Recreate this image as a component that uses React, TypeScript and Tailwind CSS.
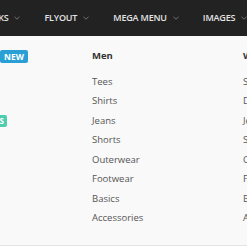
import React from "react";

const Chevron = () => (
  <svg width="6" height="4" viewBox="0 0 6 4" className="shrink-0">
    <polyline points="0.5,0.8 3,3.2 5.5,0.8" fill="none" stroke="#7a7a7a" strokeWidth="0.9" />
  </svg>
);

const navItems = ["LINKS", "FLYOUT", "MEGA MENU", "IMAGES", "PAGES"];

const men = ["Tees", "Shirts", "Jeans", "Shorts", "Outerwear", "Footwear", "Basics", "Accessories"];
const women = ["Skirts", "Dresses", "Jeans", "Shorts", "Outerwear", "Footwear", "Basics", "Accessories"];

export default function App() {
  return (
    <div className="w-[247px] h-[247px] overflow-hidden bg-white font-['Open_Sans',sans-serif]">
      <nav className="h-9 bg-[#222222] flex items-center overflow-hidden">
        <div className="flex items-center gap-[24px] -ml-[16px] shrink-0">
          {navItems.map((n) => (
            <div key={n} className="flex items-center gap-[6px] shrink-0">
              <span className="text-[9px] font-semibold text-[#e4e4e4] tracking-[-0.02em] whitespace-nowrap">{n}</span>
              <Chevron />
            </div>
          ))}
        </div>
      </nav>
      <div className="h-[210px] bg-[#f9f9f9] border-b border-[#e4e4e4] overflow-hidden">
        <div className="grid grid-cols-[151px_151px_151px] -ml-[59px] pt-[13px] w-max">
          <div className="flex flex-col">
            <div className="h-[14px] flex items-center gap-[4px]">
              <span className="w-[55px] shrink-0 text-[9.5px] font-bold text-[#333] whitespace-nowrap overflow-hidden">Featured</span>
              <span className="h-[13px] px-[4px] rounded-[2px] bg-[#2a9fd6] text-white text-[8.5px] font-bold leading-[13px]">NEW</span>
            </div>
            <ul className="mt-[9px]">
              <li className="h-[19.5px]" />
              <li className="h-[19.5px]" />
              <li className="h-[19.5px] flex items-center gap-[4px]">
                <span className="w-[31px] shrink-0 text-[9.5px] text-[#555] whitespace-nowrap overflow-hidden">Sale</span>
                <span className="h-[12px] px-[3px] rounded-[2px] bg-[#4fcdaf] text-white text-[8px] font-bold leading-[12px]">DEALS</span>
              </li>
            </ul>
          </div>
          <div className="flex flex-col">
            <div className="h-[14px] flex items-center text-[9.5px] font-bold text-[#333]">Men</div>
            <ul className="mt-[9px]">
              {men.map((m) => (
                <li key={m} className="h-[19.5px] flex items-center text-[9.5px] text-[#555]">{m}</li>
              ))}
            </ul>
          </div>
          <div className="flex flex-col">
            <div className="h-[14px] flex items-center text-[9.5px] font-bold text-[#333]">Women</div>
            <ul className="mt-[9px]">
              {women.map((m) => (
                <li key={m} className="h-[19.5px] flex items-center text-[9.5px] text-[#555]">{m}</li>
              ))}
            </ul>
          </div>
        </div>
      </div>
    </div>
  );
}
